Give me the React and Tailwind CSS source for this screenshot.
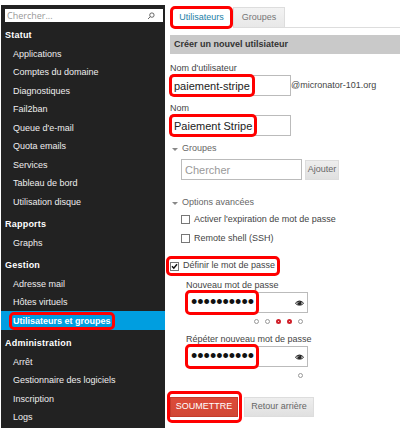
/**
 * App.jsx — Server manager, user creation form with the module menu on the left.
 */
import { useState } from 'react';
import clsx from 'clsx';

const menu = [
  {
    title: 'Statut',
    items: [
      'Applications',
      'Comptes du domaine',
      'Diagnostiques',
      'Fail2ban',
      "Queue d'e-mail",
      'Quota emails',
      'Services',
      'Tableau de bord',
      'Utilisation disque',
    ],
  },
  { title: 'Rapports', items: ['Graphs'] },
  { title: 'Gestion', items: ['Adresse mail', 'Hôtes virtuels', 'Utilisateurs et groupes'] },
  { title: 'Administration', items: ['Arrêt', 'Gestionnaire des logiciels', 'Inscription', 'Logs'] },
];

const CURRENT = 'Utilisateurs et groupes';

// Red frame drawn over the step to follow
const Mark = ({ className }) => (
  <span
    aria-hidden="true"
    className={clsx('absolute pointer-events-none border-3 border-[#ff0000] rounded-[5px]', className)}
  />
);

const SearchIcon = () => (
  <svg viewBox="0 0 8 8" className="w-2 h-2" fill="none" stroke="#444" strokeWidth="0.8">
    <circle cx="4.9" cy="3.1" r="2.2" />
    <path d="M3.3 4.7 1 7" />
  </svg>
);

const EyeIcon = () => (
  <svg viewBox="0 0 18 12" className="w-[9px] h-[6px]">
    <path d="M1 6.5C4 1 14 1 17 6.5C14 11.5 4 11.5 1 6.5Z" fill="none" stroke="#222" strokeWidth="2" />
    <circle cx="9" cy="5.8" r="4.4" fill="#222" />
    <path d="M7 5.4A2 2 0 0 1 9 3.6" fill="none" stroke="#fff" strokeWidth="1" />
  </svg>
);

const Dots = ({ colors }) => (
  <div className="flex justify-end gap-[6px] w-[122px] h-[17px] pr-[5px] items-center">
    {colors.map((c, i) => (
      <span
        key={i}
        className={clsx(
          'w-[5px] h-[5px] rounded-full',
          c === 'red' ? 'border-2 border-[#d0202a]' : 'border border-[#999]'
        )}
      />
    ))}
  </div>
);

const Sidebar = () => (
  <nav className="w-[164px] shrink-0 ml-px mt-[5px] pt-1 pb-[3px] bg-[#222] text-[#eee]">
    <div className="relative ml-1 mr-[2px] mb-1">
      <input
        type="search"
        aria-label="Chercher"
        placeholder="Chercher..."
        className="block w-full h-[13px] px-[2px] bg-white text-[#333] font-['Open_Sans',sans-serif] text-[9px] leading-[13px] placeholder:text-[#999] outline-none"
      />
      <span className="absolute right-2 top-[3px]">
        <SearchIcon />
      </span>
    </div>
    {menu.map((section) => (
      <section key={section.title} className="mb-1">
        <h2 className="h-[18px] pl-1 text-[9px] leading-[18px] font-bold text-white tracking-wide">{section.title}</h2>
        <ul>
          {section.items.map((item) => (
            <li
              key={item}
              className={clsx(
                'odd:h-[19px] even:h-[18px] pl-[12px] flex items-center',
                item === CURRENT && 'bg-[#009ee0] font-bold text-white'
              )}
            >
              <a href="#" className="relative leading-[18px]">
                {item}
                {item === CURRENT && <Mark className="-left-[4px] -right-[4px] top-0 bottom-0" />}
              </a>
            </li>
          ))}
        </ul>
      </section>
    ))}
  </nav>
);

const PasswordField = ({ id, label, value, onChange }) => (
  <div>
    <label htmlFor={id} className="block h-[14px] leading-[14px]">
      {label}
    </label>
    <div className="relative w-[122px]">
      <input
        id={id}
        type="password"
        value={value}
        onChange={(e) => onChange(e.target.value)}
        className="block w-full h-[21px] px-1 border border-[#bbb] text-[18px] leading-[19px] text-[#111] outline-none"
      />
      <button type="button" aria-label="Afficher le mot de passe" className="absolute right-1 top-[8px]">
        <EyeIcon />
      </button>
      <Mark className="-left-px w-[74px] -top-[2px] -bottom-[2px]" />
    </div>
  </div>
);

const fieldClass = 'block w-[121px] h-[21px] px-[3px] border border-[#bbb] text-[11px] text-[#222] outline-none';
const greyButton = 'h-[20px] border border-[#ddd] bg-linear-to-b from-[#eee] to-[#e0e0e0] text-[#666]';

const App = () => {
  const [username, setUsername] = useState('paiement-stripe');
  const [name, setName] = useState('Paiement Stripe');
  const [password, setPassword] = useState('motdepasse');
  const [confirm, setConfirm] = useState('motdepasse');
  const [setPass, setSetPass] = useState(true);

  return (
    <div className="flex bg-white font-['Liberation_Sans',Arial,sans-serif] text-[9px] text-[#444]">
      <Sidebar />

      <main className="flex-1 min-w-0 pl-[5px] pt-[7px]">
        {/* Tabs */}
        <div role="tablist" className="flex h-[21px] border-b border-[#ddd]">
          <button type="button" role="tab" aria-selected="true" className="relative w-[63px] h-[21px] bg-white text-[#1b7ea6]">
            Utilisateurs
            <Mark className="left-0 right-0 -top-px -bottom-px" />
          </button>
          <button
            type="button"
            role="tab"
            aria-selected="false"
            className="w-[52px] h-[20px] border border-b-0 border-[#ddd] bg-linear-to-b from-[#f3f3f3] to-[#e8e8e8] text-[#777]"
          >
            Groupes
          </button>
        </div>

        <h1 className="mt-[7px] h-[19px] pl-1 bg-[#c9c9c9] leading-[19px] font-bold text-[#333]">
          Créer un nouvel utilsiateur
        </h1>

        <form onSubmit={(e) => e.preventDefault()}>
          <label htmlFor="username" className="block mt-[7px] h-[14px] leading-[14px]">
            Nom d'utilisateur
          </label>
          <div className="relative flex items-center">
            <input id="username" value={username} onChange={(e) => setUsername(e.target.value)} className={fieldClass} />
            <span>@micronator-101.org</span>
            <Mark className="-left-px w-[86px] -top-px -bottom-px" />
          </div>

          <label htmlFor="name" className="block mt-[5px] h-[14px] leading-[14px]">
            Nom
          </label>
          <div className="relative">
            <input id="name" value={name} onChange={(e) => setName(e.target.value)} className={fieldClass} />
            <Mark className="-left-px w-[88px] -top-px -bottom-px" />
          </div>

          {/* Groups */}
          <fieldset className="mt-[6px]">
            <legend className="flex items-center h-[14px] pl-[2px] gap-1 text-[#666]">
              <span className="border-x-3 border-t-3 border-x-transparent border-t-[#888]" />
              Groupes
            </legend>
            <div className="flex items-end gap-[3px] mt-[3px] pl-[11px]">
              <input aria-label="Chercher un groupe" placeholder="Chercher" className={clsx(fieldClass, 'placeholder:text-[#999]')} />
              <button type="button" className={clsx(greyButton, 'w-[34px]')}>
                Ajouter
              </button>
            </div>
          </fieldset>

          {/* Advanced options */}
          <fieldset className="mt-[16px]">
            <legend className="flex items-center h-[14px] pl-[2px] gap-1 text-[#666]">
              <span className="border-x-3 border-t-3 border-x-transparent border-t-[#888]" />
              Options avancées
            </legend>
            <div className="pl-[11px] flex flex-col">
              <label className="flex items-center h-[19px] gap-1">
                <input type="checkbox" className="appearance-none w-[9px] h-[9px] border border-[#777] bg-white" />
                Activer l'expiration de mot de passe
              </label>
              <label className="flex items-center h-[19px] gap-1">
                <input type="checkbox" className="appearance-none w-[9px] h-[9px] border border-[#777] bg-white" />
                Remote shell (SSH)
              </label>
            </div>
          </fieldset>

          <div className="flex mt-[9px]">
            <label className="relative flex items-center h-[18px] gap-1">
              <span className="relative w-[9px] h-[9px]">
                <input
                  type="checkbox"
                  checked={setPass}
                  onChange={(e) => setSetPass(e.target.checked)}
                  className="block appearance-none w-[9px] h-[9px] border border-[#777] bg-white"
                />
                {setPass && (
                  <svg viewBox="0 0 9 9" className="absolute inset-0 pointer-events-none" fill="none" stroke="#111" strokeWidth="1.5">
                    <path d="M2 4.2 3.8 6.2 7 2.2" />
                  </svg>
                )}
              </span>
              Définir le mot de passe
              <Mark className="-left-1 -right-[5px] -top-px -bottom-px" />
            </label>
          </div>

          <div className="pl-[16px] mt-[3px]">
            <PasswordField id="password" label="Nouveau mot de passe" value={password} onChange={setPassword} />
            <Dots colors={['grey', 'grey', 'red', 'red', 'grey']} />
            <div className="mt-[2px]">
              <PasswordField id="confirm" label="Répéter nouveau mot de passe" value={confirm} onChange={setConfirm} />
              <Dots colors={['grey']} />
            </div>
          </div>

          <div className="flex gap-[6px] mt-[13px] pb-3">
            <div className="relative">
              <button type="submit" className="block w-[68px] h-[20px] border border-[#c43c2c] bg-linear-to-b from-[#dd4b39] to-[#d14836] text-white uppercase">
                Soumettre
              </button>
              <Mark className="-left-[3px] -right-1 -top-[6px] -bottom-[6px]" />
            </div>
            <button type="button" className={clsx(greyButton, 'w-[70px]')}>
              Retour arrière
            </button>
          </div>
        </form>
      </main>
    </div>
  );
};

export default App;
